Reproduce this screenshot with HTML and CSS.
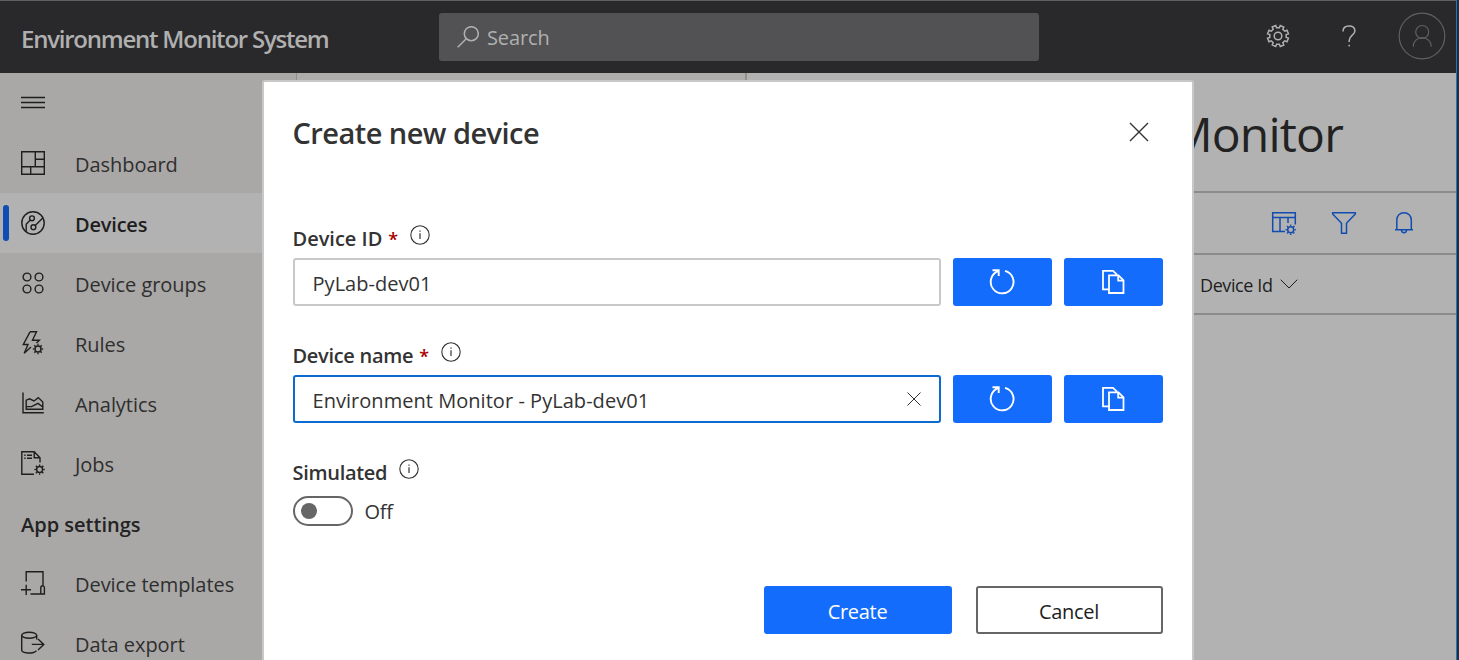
FILE: index.html
```html
<!DOCTYPE html>
<html lang="en">
<head>
<meta charset="utf-8">
<title>Environment Monitor System</title>
<link rel="stylesheet" href="styles.css">
</head>
<body>
<svg class="defs" aria-hidden="true">
  <symbol id="cog" viewBox="-6 -6 12 12" overflow="visible">
    <circle r="3" fill="none" stroke="currentColor" stroke-width="1.5"/>
    <circle r="4.4" fill="none" stroke="currentColor" stroke-width="1.6" pathLength="16" stroke-dasharray="0.8 1.2" stroke-dashoffset="0.4"/>
  </symbol>
  <symbol id="refresh" viewBox="0 0 26 26">
    <path d="M16 1.9A11.4 11.4 0 1 1 9.3 2.2M3.5 1.2H9.7V7" fill="none" stroke="currentColor" stroke-width="1.9"/>
  </symbol>
  <symbol id="copy" viewBox="0 0 24 26">
    <path d="M8 20.3H2V1.9H12L16 5.6M8 6.3H17.5L22.5 11.3V24H8ZM17.2 6.3V11.6H22.5" fill="none" stroke="currentColor" stroke-width="1.8"/>
  </symbol>
  <symbol id="info" viewBox="0 0 20 20">
    <circle cx="10" cy="10" r="9.2" fill="none" stroke="currentColor" stroke-width="1.1"/>
    <path d="M10 8.2V14M10 5.4V6.8" stroke="currentColor" stroke-width="1.2"/>
  </symbol>
</svg>
<div class="window">
  <header class="topbar">
    <h1 class="brand">Environment Monitor System</h1>
    <div class="search">
      <svg width="22" height="22" viewBox="0 0 22 22"><circle cx="14.3" cy="7.7" r="7" /><path d="M9.3 12.7L.7 21.3"/></svg>
      <span>Search</span>
    </div>
    <div class="tools">
      <svg class="tool-gear" width="24" height="24" viewBox="0 0 24 24"><path transform="rotate(22.5 12 12)" d="M20.09 10.13L22.5 10.09V13.91L20.09 13.87L19.04 16.4L20.8 18.1L18.1 20.8L16.4 19.04L13.87 20.09L13.91 22.5H10.09L10.13 20.09L7.6 19.04L5.9 20.8L3.2 18.1L4.96 16.4L3.91 13.87L1.5 13.91V10.09L3.91 10.13L4.96 7.6L3.2 5.9L5.9 3.2L7.6 4.96L10.13 3.91L10.09 1.5H13.91L13.87 3.91L16.4 4.96L18.1 3.2L20.8 5.9L19.04 7.6Z"/><circle cx="12" cy="12" r="3.8"/></svg>
      <svg class="tool-help" width="14" height="22" viewBox="0 0 14 22"><path d="M1 6.5C1 3 3.4.9 7 .9S12.9 3 12.9 6C12.9 10 7.2 10.5 7.2 15.5V17M7.2 19.7V21.6"/></svg>
      <svg class="tool-user" width="48" height="48" viewBox="0 0 48 48"><circle cx="24" cy="24" r="22.8"/><circle cx="24.2" cy="20" r="6.5"/><path d="M15.3 34.8V34A8.9 8.4 0 0 1 33.1 34V34.8"/></svg>
    </div>
  </header>
  <div class="body">
    <nav class="sidebar">
      <div class="nav-row"><svg viewBox="0 0 24 24"><path d="M0 6.5H24M0 11.5H24M0 16.5H24"/></svg></div>
      <a class="nav-row"><svg viewBox="0 0 24 24"><path d="M.7.7H23.3V23.3H.7ZM14.3.7V15.7M.7 15.7H23.3M14.3 8.3H23.3M9.7 15.7V23.3"/></svg><span>Dashboard</span></a>
      <a class="nav-row active"><svg viewBox="0 0 24 24"><circle cx="12" cy="12" r="11.2"/><circle cx="11" cy="7.3" r="2.4"/><circle cx="12.4" cy="16.2" r="2.4"/><path d="M9.2 9L5.2 13.2V20.5M14.2 14.4L21.8 7"/></svg><span>Devices</span></a>
      <a class="nav-row"><svg viewBox="0 0 24 24"><circle cx="6" cy="6" r="3.9"/><circle cx="18" cy="6" r="3.9"/><circle cx="6" cy="18" r="3.9"/><circle cx="18" cy="18" r="3.9"/></svg><span>Device groups</span></a>
      <a class="nav-row"><svg viewBox="0 0 24 24"><path d="M9 .8H15.5L11.5 9.3H18.3L15.5 12M9 .8L2.3 13.5H7L3.2 22.3L10 16"/><use href="#cog" x="11" y="12" width="12" height="12"/></svg><span>Rules</span></a>
      <a class="nav-row"><svg viewBox="0 0 24 24"><path d="M2 1.5V21.7H22.8M5.2 18.2V9.2L8.5 7.8L13 10L17.3 6.6L21.8 11V18.2ZM5.2 15.6H10.5L17 12.4L21.8 16"/></svg><span>Analytics</span></a>
      <a class="nav-row"><svg viewBox="0 0 24 24"><path d="M13 23.2H.8V.8H13.2L19 6.8V11.5M13.2.8V6.8H19M3.2 4.2H4.6M6 4.2H11M3.2 7.2H4.6M6 7.2H11"/><use href="#cog" x="12.6" y="12.6" width="12" height="12"/></svg><span>Jobs</span></a>
      <div class="nav-heading">App settings</div>
      <a class="nav-row"><svg viewBox="0 0 24 24"><path d="M5.2 10.5V.8H22V15M9.5 23H22M0 18.7H10M5.2 13.7V24M19.8 23V17Q19.8 14.8 21.6 14.8T23.4 17V23Z"/></svg><span>Device templates</span></a>
      <a class="nav-row"><svg viewBox="0 0 24 24"><ellipse cx="8.2" cy="4.2" rx="7.5" ry="3"/><path d="M.7 4.2V19C.7 22.6 12 23.2 15.5 19.7M15.7 4.2V8.5M10.8 13.4H22.8M17 8L22.8 13.4L17 19"/></svg><span>Data export</span></a>
    </nav>
    <section class="templates"></section>
    <main class="content">
      <div class="page-title">Environment Monitor</div>
      <div class="actions">
        <svg viewBox="0 0 24 24"><path d="M13 19.5H.7V.7H23.3V12.5M.7 5.5H23.3M8 5.5V19.5M16 5.5V11"/><use href="#cog" x="12.7" y="11.8" width="12" height="12"/></svg>
        <svg viewBox="0 0 24 24"><path d="M.7.8H23.3V2L14.5 11.2V21.2H9.5V11.2L.7 2Z"/></svg>
        <svg viewBox="0 0 24 24"><path d="M4.8 17.6V8C4.8 3.8 7.8.8 12 .8S19.3 3.8 19.3 8V17.6M3 17.7H21M9.5 18C9.5 21.5 14.5 21.5 14.5 18"/></svg>
      </div>
      <div class="columns"><span>Device Id</span><svg width="18" height="10" viewBox="0 0 18 10"><path d="M.7.7L9 9L17.3.7"/></svg></div>
    </main>
  </div>
  <div class="overlay">
    <form class="dialog">
      <div class="dialog-head">
        <h2>Create new device</h2>
        <svg width="20" height="20" viewBox="0 0 20 20"><path d="M1 1L19 19M19 1L1 19"/></svg>
      </div>
      <div class="field">
        <div class="label"><span class="device-id">Device ID</span><i>*</i><svg><use href="#info"/></svg></div>
        <div class="control">
          <div class="input"><span>PyLab-dev01</span></div>
          <div class="square"><svg width="26" height="26"><use href="#refresh"/></svg></div>
          <div class="square"><svg width="24" height="26"><use href="#copy"/></svg></div>
        </div>
      </div>
      <div class="field">
        <div class="label"><span>Device name</span><i>*</i><svg><use href="#info"/></svg></div>
        <div class="control">
          <div class="input focused"><span>Environment Monitor - PyLab-dev01</span><svg width="14" height="14" viewBox="0 0 14 14"><path d="M.5.5L13.5 13.5M13.5.5L.5 13.5"/></svg></div>
          <div class="square"><svg width="26" height="26"><use href="#refresh"/></svg></div>
          <div class="square"><svg width="24" height="26"><use href="#copy"/></svg></div>
        </div>
      </div>
      <div class="field">
        <div class="label"><span>Simulated</span><svg><use href="#info"/></svg></div>
        <div class="toggle-row"><span class="toggle"></span><span class="state">Off</span></div>
      </div>
      <div class="buttons">
        <div class="button primary">Create</div>
        <div class="button">Cancel</div>
      </div>
    </form>
  </div>
</div>
</body>
</html>
```

FILE: styles.css
```css
* { box-sizing: border-box; }
body {
  margin: 0;
  height: 660px;
  overflow: hidden;
  background: #262d33;
  font: 20px/26px "Open Sans", "Noto Sans", sans-serif;
  letter-spacing: -0.3px;
  color: #2f2f2f;
}
svg { flex: none; fill: none; stroke: currentColor; }
svg.defs { display: none; }

.window {
  position: relative;
  width: 1457px;
  height: 660px;
  overflow: hidden;
  border-right: 1px solid #1576cc;
}

.topbar {
  display: flex;
  align-items: center;
  height: 73px;
  padding: 0 10px 0 21px;
  border-top: 1px solid #5d5f61;
  background: #29292b;
  color: #b0b0b0;
}
.brand {
  flex: none;
  width: 418px;
  margin: 0;
  padding-top: 3px;
  font-size: 24px;
  font-weight: 600;
  letter-spacing: -1.23px;
  line-height: 34px;
}
.search {
  display: flex;
  align-items: center;
  gap: 8px;
  width: 600px;
  height: 48px;
  padding-left: 18px;
  border-radius: 3px;
  background: #525254;
  letter-spacing: -0.1px;
}
.search svg { stroke-width: 1.5; }
.search span { padding-top: 2px; }
.tools {
  display: flex;
  align-items: center;
  margin-left: auto;
  padding-bottom: 3px;
}
.tool-gear { stroke-width: 1.5; margin-right: 52px; }
.tool-help { stroke-width: 1.5; margin-right: 42px; }
.tool-user { stroke-width: 1.2; color: #606062; }

.body { display: flex; height: 587px; }
.sidebar {
  width: 297px;
  border-right: 1px solid #8f8e8d;
  background: #a9a8a6;
  letter-spacing: -0.05px;
}
.nav-row {
  position: relative;
  display: flex;
  align-items: center;
  gap: 30px;
  height: 60px;
  padding-left: 21px;
}
.nav-row svg {
  width: 24px;
  height: 24px;
  overflow: visible;
  stroke-width: 1.4;
  color: #1e1e1e;
}
.nav-row span { padding-top: 3px; }
.nav-row.active { background: #b2b2b2; font-weight: 600; letter-spacing: -0.2px; color: #1e1e1e; }
.nav-row.active::before {
  content: "";
  position: absolute;
  left: 3px;
  top: 12px;
  width: 6px;
  height: 36px;
  border-radius: 3px;
  background: #0f4db3;
}
.nav-heading {
  height: 60px;
  padding: 19px 0 0 21px;
  font-weight: 600;
  letter-spacing: 0;
  color: #232323;
}
.templates {
  width: 450px;
  border-right: 2px solid #929191;
  background: #aeadab;
}
.content { flex: 1; background: #b2b2b2; }
.page-title {
  height: 120px;
  padding: 29px 113px 0 0;
  border-bottom: 2px solid #8b8b8b;
  font-size: 48px;
  line-height: 64px;
  letter-spacing: -0.8px;
  text-align: right;
  color: #222;
}
.actions {
  display: flex;
  justify-content: flex-end;
  gap: 36px;
  height: 62px;
  padding: 19px 40px 0 0;
  border-bottom: 2px solid #8b8b8b;
  color: #134cb0;
}
.actions svg { width: 24px; height: 24px; stroke-width: 1.5; overflow: visible; }
.columns {
  display: flex;
  align-items: center;
  gap: 7px;
  height: 60px;
  padding-left: 453px;
  border-bottom: 2px solid #8b8b8b;
  font-size: 18px;
  letter-spacing: -0.4px;
  color: #1e1e1e;
}
.columns span { padding-top: 2px; }

.overlay {
  position: absolute;
  inset: 0;
  display: flex;
  justify-content: center;
  padding-top: 80px;
}
.dialog {
  width: 932px;
  height: 640px;
  padding: 0 29.5px 0 28.5px;
  border: 2px solid #c8c8c8;
  border-radius: 3px;
  background: #fff;
  color: #333;
}
.dialog-head {
  display: flex;
  justify-content: space-between;
  padding: 30px 14px 0 0;
  height: 146px;
}
.dialog-head h2 {
  margin: 0;
  font-size: 29px;
  line-height: 42px;
  font-weight: 600;
  letter-spacing: -0.55px;
}
.dialog-head svg { margin-top: 10px; stroke-width: 1.4; }
.field { height: 117px; }
.label {
  display: flex;
  height: 30px;
  font-weight: 600;
}
.label span { line-height: 22px; }
.label .device-id { letter-spacing: 0; }
.label i {
  margin-left: 6px;
  font-size: 18px;
  font-style: normal;
  line-height: 22px;
  color: #a80000;
}
.label svg { width: 20px; height: 20px; margin-left: 12px; margin-top: -3px; }
.control { display: flex; gap: 12px; }
.input {
  display: flex;
  align-items: center;
  justify-content: space-between;
  flex: 1;
  height: 48px;
  padding: 0 18px;
  border: 2px solid #c8c8c8;
  border-radius: 3px;
  letter-spacing: 0.04px;
}
.input span { padding-top: 3px; }
.input.focused { border-color: #0b69d0; }
.square {
  display: flex;
  align-items: center;
  justify-content: center;
  width: 99px;
  height: 48px;
  border-radius: 3px;
  background: #136cfb;
  color: #fff;
}
.toggle-row { display: flex; align-items: center; gap: 12px; padding-top: 4px; height: 34px; }
.toggle {
  width: 60px;
  height: 30px;
  padding: 5px 6px;
  border: 2px solid #666;
  border-radius: 15px;
}
.toggle::before {
  content: "";
  display: block;
  width: 16px;
  height: 16px;
  border-radius: 8px;
  background: #666;
}
.state { padding-top: 2px; }
.buttons {
  display: flex;
  justify-content: flex-end;
  gap: 24px;
  padding-top: 7px;
}
.button {
  width: 187px;
  height: 48px;
  padding-top: 11px;
  border: 2px solid #666;
  border-radius: 3px;
  text-align: center;
  color: #1e1e1e;
}
.button.primary { width: 188px; border-color: #136cfb; background: #136cfb; color: #fff; }
```
